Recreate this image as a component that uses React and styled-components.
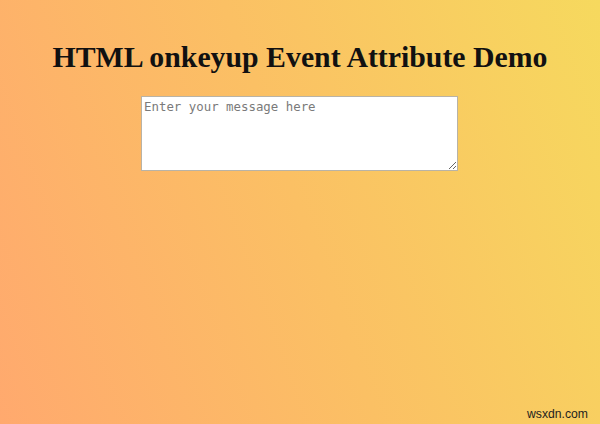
import React from "react";
import styled, { createGlobalStyle } from "styled-components";

const Global = createGlobalStyle`
  html, body { margin: 0; padding: 0; height: 100%; }
  body { font-family: "Liberation Serif", "Times New Roman", serif; }
  #root { min-height: 100%; }
`;

const Page = styled.main`
  position: relative;
  box-sizing: border-box;
  width: 100%;
  min-height: 100vh;
  padding: 40px 8px 0;
  display: flex;
  flex-direction: column;
  align-items: center;
  background: linear-gradient(70deg, #ffa96e 0%, #fbc064 50%, #f6d95e 100%);
`;

const Title = styled.h1`
  margin: 0 0 22px;
  font-family: "Liberation Serif", "Times New Roman", serif;
  font-weight: bold;
  font-size: 29.8px;
  line-height: 34px;
  color: #111;
  text-align: center;
`;

const Message = styled.textarea`
  box-sizing: border-box;
  width: 317px;
  height: 75px;
  margin: 0 0 0 -1px;
  padding: 2px;
  border: 1px solid #b9b3a6;
  background: #fff;
  font-family: "DejaVu Sans Mono", monospace;
  font-size: 12.4px;
  color: #222;
  resize: both;
  &::placeholder { color: #7a7a7a; }
`;

const Watermark = styled.span`
  position: absolute;
  right: 12px;
  bottom: 3px;
  font-family: "Liberation Sans", Arial, sans-serif;
  font-size: 12.2px;
  color: #1e1e1e;
`;

export default function App() {
  return (
    <>
      <Global />
      <Page>
        <Title>HTML onkeyup Event Attribute Demo</Title>
        <Message placeholder="Enter your message here" />
        <Watermark>wsxdn.com</Watermark>
      </Page>
    </>
  );
}
